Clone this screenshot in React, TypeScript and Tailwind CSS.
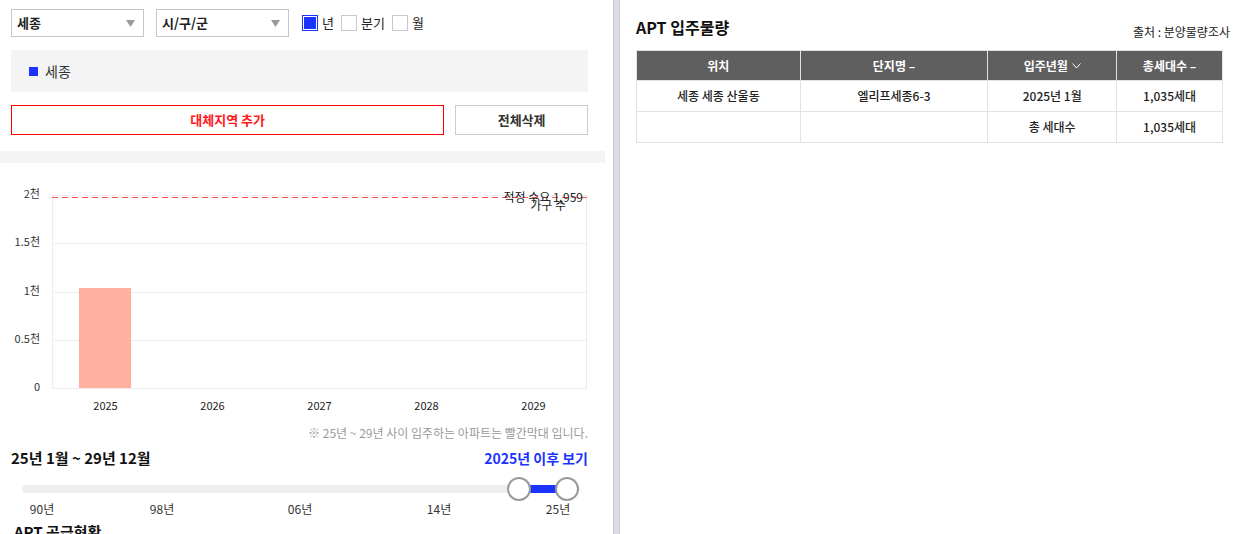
import React from "react";

const FONT = { fontFamily: '"Noto Sans CJK KR", "Noto Sans", sans-serif' };

function Select({ label }: { label: string }) {
  return (
    <div className="flex h-[28px] w-[133px] items-center justify-between border border-[#c5c6cc] bg-white pl-[5px] pr-[8px]">
      <span className="text-[13px] font-bold text-[#222]">{label}</span>
      <svg width="9" height="7" viewBox="0 0 9 7">
        <path d="M0 0 L9 0 L4.5 7 Z" fill="#9a9a9a" />
      </svg>
    </div>
  );
}

function Check({ label, checked }: { label: string; checked?: boolean }) {
  return (
    <div className="flex items-center gap-[4px]">
      <div
        className={
          checked
            ? "h-[16px] w-[16px] border border-[#1b33ff] bg-[#1b33ff] shadow-[inset_0_0_0_1px_#ffffff]"
            : "h-[16px] w-[16px] border border-[#c8c8cc] bg-white"
        }
      />
      <span className="text-[13px] text-[#222]">{label}</span>
    </div>
  );
}

function Chart() {
  const left = 52;
  const right = 587;
  const y0 = 225;
  const y2000 = 32;
  const yFor = (v: number) => Math.round(y0 - ((y0 - y2000) * v) / 2000);
  const ticks = [
    { v: 2000, l: "2천" },
    { v: 1500, l: "1.5천" },
    { v: 1000, l: "1천" },
    { v: 500, l: "0.5천" },
    { v: 0, l: "0" },
  ];
  const years = ["2025", "2026", "2027", "2028", "2029"];
  const cw = (right - left) / 5;
  const dashes: number[] = [];
  for (let x = left; x < right; x += 10) dashes.push(x);
  return (
    <svg width="605" height="258" className="block shrink-0" style={FONT}>
      {ticks.map((t) => (
        <g key={t.l}>
          <rect x={left} y={yFor(t.v)} width={right - left} height={1} fill="#ececec" />
          <text x={40} y={yFor(t.v) + 3} textAnchor="end" fontSize="11" fill="#333">
            {t.l}
          </text>
        </g>
      ))}
      <rect x={left} y={y2000} width={1} height={y0 - y2000} fill="#ececec" />
      <rect x={right - 1} y={y2000} width={1} height={y0 - y2000} fill="#ececec" />
      <rect x={79} y={yFor(1035)} width={52} height={y0 - yFor(1035)} fill="#ffb0a0" />
      {years.map((y, i) => (
        <text key={y} x={left + cw * i + cw / 2} y={247} textAnchor="middle" fontSize="11" fill="#222">
          {y}
        </text>
      ))}
      {dashes.map((x) => (
        <rect key={x} x={x} y={34} width={Math.min(6, right - x)} height={1} fill="#ff5050" />
      ))}
      <text x={583} y={39} textAnchor="end" fontSize="12" fill="#222">
        적정 수요 1,959
      </text>
      <text x={566} y={47} textAnchor="end" fontSize="12" fill="#222">
        가구 수
      </text>
    </svg>
  );
}

function Slider() {
  const ticks = [
    { l: "90년", x: 42 },
    { l: "98년", x: 162 },
    { l: "06년", x: 300 },
    { l: "14년", x: 439 },
    { l: "25년", x: 558 },
  ];
  return (
    <div className="relative mt-[7px] h-[50px] w-[605px] shrink-0">
      <div className="absolute left-[22px] top-[10px] h-[8px] w-[558px] rounded-full bg-[#eeeff1]" />
      <div className="absolute left-[519px] top-[10px] h-[8px] w-[48px] bg-[#1b33ff]" />
      <div className="absolute left-[507px] top-[2px] h-[24px] w-[24px] rounded-full border-2 border-[#9a9a9a] bg-white" />
      <div className="absolute left-[555px] top-[2px] h-[24px] w-[24px] rounded-full border-2 border-[#9a9a9a] bg-white" />
      {ticks.map((t) => (
        <span
          key={t.l}
          className="absolute top-[25px] -translate-x-1/2 text-[12px] text-[#333]"
          style={{ left: t.x }}
        >
          {t.l}
        </span>
      ))}
    </div>
  );
}

function LeftPanel() {
  return (
    <div className="flex h-[534px] w-[605px] shrink-0 flex-col overflow-hidden">
      <div className="flex shrink-0 flex-col pl-[11px] pr-[17px]">
        <div className="mt-[9px] flex items-center">
          <Select label="세종" />
          <div className="ml-[12px]">
            <Select label="시/구/군" />
          </div>
          <div className="ml-[13px] flex items-center gap-[7px]">
            <Check label="년" checked />
            <Check label="분기" />
            <Check label="월" />
          </div>
        </div>
        <div className="mt-[13px] flex h-[42px] items-center bg-[#f4f4f4] pl-[18px]">
          <div className="h-[9px] w-[9px] bg-[#1b33ff]" />
          <span className="ml-[7px] text-[14px] text-[#333]">세종</span>
        </div>
        <div className="mt-[13px] flex h-[30px] gap-[11px]">
          <div className="flex w-[434px] items-center justify-center border border-[#ff0000] text-[13px] font-bold text-[#ff1a1a]">
            대체지역 추가
          </div>
          <div className="flex w-[133px] items-center justify-center border border-[#cccccc] text-[13px] font-bold text-[#333]">
            전체삭제
          </div>
        </div>
      </div>
      <div className="mt-[16px] h-[12px] w-[605px] shrink-0 bg-[#f4f4f4]" />
      <Chart />
      <div className="mt-[4px] flex shrink-0 justify-end pr-[17px]">
        <span className="text-[12px] leading-[16px] text-[#9a9a9a]">
          ※ 25년 ~ 29년 사이 입주하는 아파트는 빨간막대 입니다.
        </span>
      </div>
      <div className="mt-[7px] flex shrink-0 items-center justify-between pl-[11px] pr-[17px]">
        <span className="text-[15px] font-bold leading-[20px] text-[#111]">25년 1월 ~ 29년 12월</span>
        <span className="text-[14px] font-bold leading-[20px] text-[#1b33ff]">2025년 이후 보기</span>
      </div>
      <Slider />
      <div className="-mt-[4px] shrink-0 pl-[14px] text-[15px] font-bold text-[#111]">APT 공급현황</div>
    </div>
  );
}

function RightPanel() {
  const cols = ["w-[164px]", "w-[188px]", "w-[129px]", "w-[106px]"];
  return (
    <div className="flex flex-1 flex-col pl-[16px] pr-[7px]">
      <div className="mt-[16px] flex items-end justify-between">
        <span className="text-[16px] font-bold leading-[22px] text-[#111]">APT 입주물량</span>
        <span className="mb-[-3px] text-[12px] text-[#222]">출처 : 분양물량조사</span>
      </div>
      <table className="mt-[12px] w-[587px] border-collapse text-[12px]">
        <thead>
          <tr className="h-[30px] bg-[#5f5f5f] text-white">
            <th className={`${cols[0]} border border-[#e2e2e2] font-bold`}>위치</th>
            <th className={`${cols[1]} border border-[#e2e2e2] font-bold`}>단지명 –</th>
            <th className={`${cols[2]} border border-[#e2e2e2] font-bold`}>
              <span className="inline-flex items-center gap-[4px]">
                입주년월
                <svg width="9" height="6" viewBox="0 0 9 6">
                  <path d="M0.5 0.5 L4.5 5 L8.5 0.5" fill="none" stroke="#fff" strokeWidth="1" />
                </svg>
              </span>
            </th>
            <th className={`${cols[3]} border border-[#e2e2e2] font-bold`}>총세대수 –</th>
          </tr>
        </thead>
        <tbody className="font-medium text-[#222]">
          <tr className="h-[31px]">
            <td className="border border-[#e2e2e2] text-center">세종 세종 산울동</td>
            <td className="border border-[#e2e2e2] text-center">엘리프세종6-3</td>
            <td className="border border-[#e2e2e2] text-center">2025년 1월</td>
            <td className="border border-[#e2e2e2] text-center">1,035세대</td>
          </tr>
          <tr className="h-[31px]">
            <td className="border border-[#e2e2e2]" />
            <td className="border border-[#e2e2e2]" />
            <td className="border border-[#e2e2e2] text-center">총 세대수</td>
            <td className="border border-[#e2e2e2] text-center">1,035세대</td>
          </tr>
        </tbody>
      </table>
    </div>
  );
}

export default function App() {
  return (
    <div className="flex h-[534px] w-[1237px] overflow-hidden bg-white" style={FONT}>
      <LeftPanel />
      <div className="ml-[8px] h-[534px] w-[7px] shrink-0 border-x border-[#c9c9d1] bg-[#dcdce2]" />
      <RightPanel />
    </div>
  );
}
